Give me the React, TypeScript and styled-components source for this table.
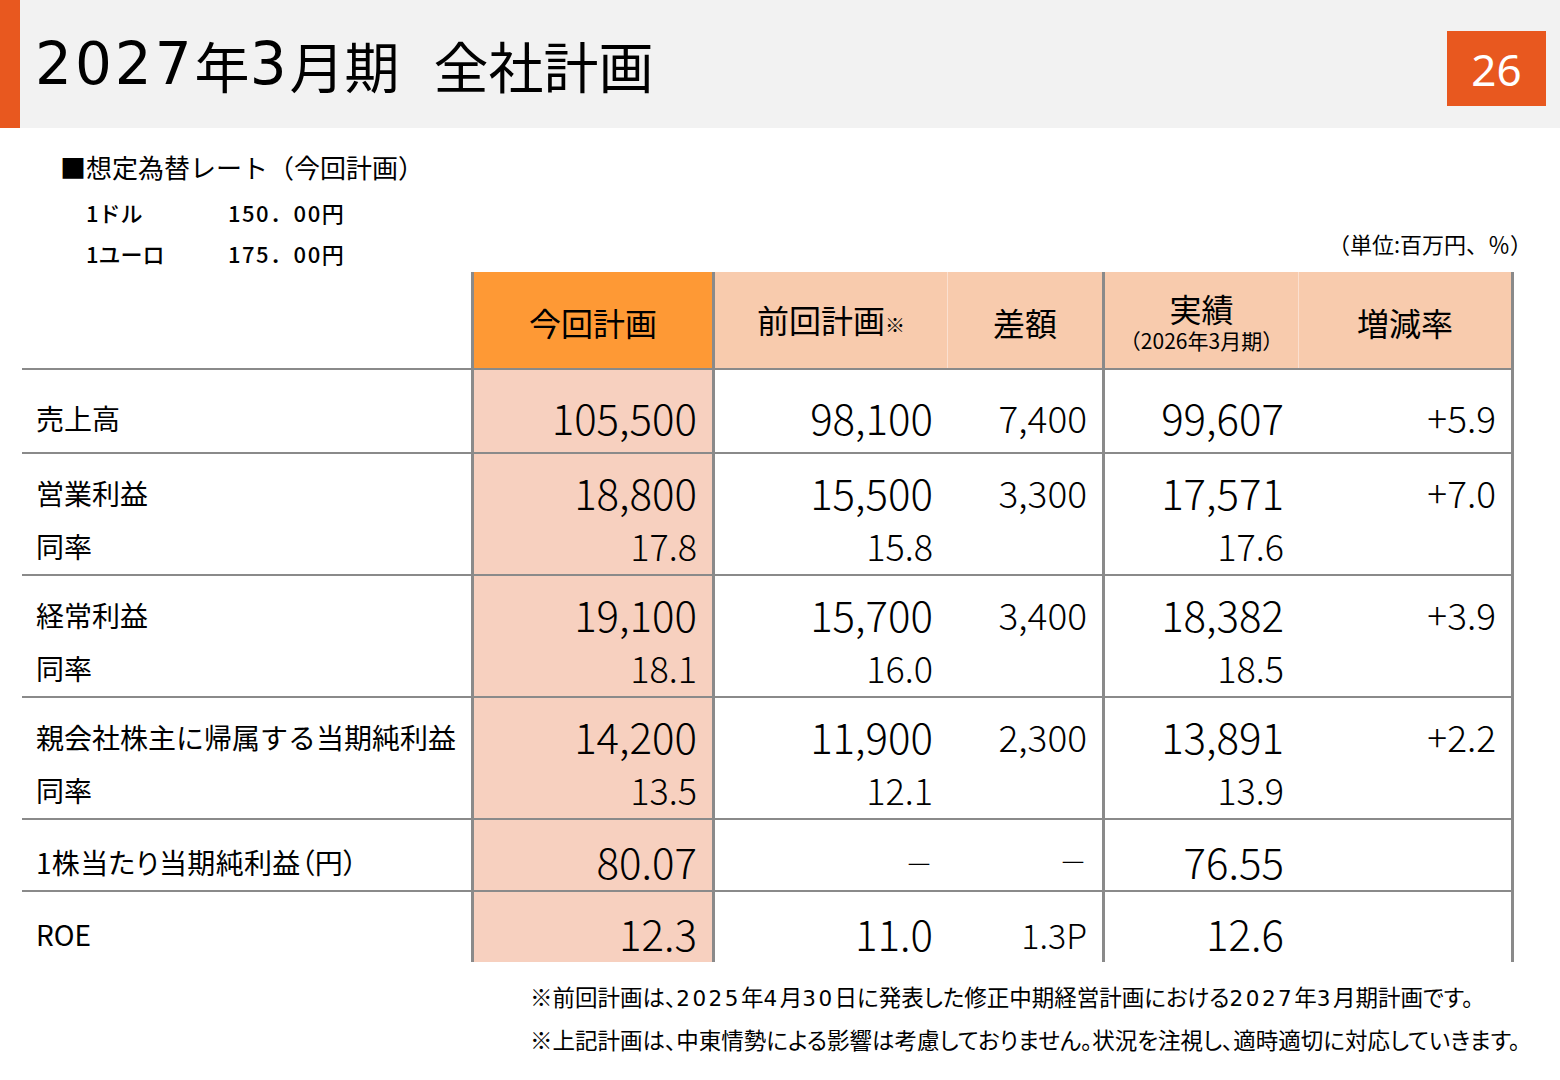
import React from "react";
import styled, { createGlobalStyle, css } from "styled-components";

const GlobalStyle = createGlobalStyle`
  html, body { margin: 0; padding: 0; background: #ffffff; }
  body {
    font-family: "Noto Sans CJK JP", "Noto Sans", sans-serif;
    color: #111;
  }
`;

const ORANGE = "#e8581f";
const LINE = "#8a8a8a";

const Page = styled.div`
  width: 1560px;
  height: 1080px;
  background: #fff;
  display: flex;
  flex-direction: column;
  overflow: hidden;
`;

const Header = styled.header`
  height: 128px;
  flex-shrink: 0;
  background: #f2f2f2;
  display: flex;
  align-items: stretch;
`;

const Accent = styled.div`
  width: 20px;
  flex-shrink: 0;
  background: ${ORANGE};
`;

const Title = styled.h1`
  margin: 0;
  flex: 1;
  display: flex;
  align-items: center;
  padding: 0 0 0 15px;
  font-size: 55px;
  font-weight: 400;
  color: #000;
  white-space: nowrap;
`;

const TitleNum = styled.span`
  font-family: "DejaVu Sans", "Noto Sans CJK JP", sans-serif;
  font-size: 58px;
  letter-spacing: 3px;
`;

const TitleGap = styled.span`
  display: inline-block;
  width: 34px;
`;

const PageNo = styled.div`
  align-self: flex-start;
  margin: 31px 14px 0 0;
  width: 99px;
  height: 75px;
  background: ${ORANGE};
  color: #fff;
  display: flex;
  align-items: center;
  justify-content: center;
  font-size: 44px;
  font-family: "Noto Sans", "Noto Sans CJK JP", sans-serif;
`;

const InfoArea = styled.section`
  height: 144px;
  width: 1510px;
  margin-left: 22px;
  display: flex;
  justify-content: space-between;
  align-items: flex-start;
`;

const RateBlock = styled.div`
  padding: 22px 0 0 38px;
  display: flex;
  flex-direction: column;
`;

const RateTitle = styled.div`
  font-size: 26px;
  line-height: 34px;
  color: #000;
  white-space: nowrap;
`;

const RateGrid = styled.div`
  display: grid;
  grid-template-columns: 142px auto;
  grid-template-rows: 42px 40px;
  padding: 7px 0 0 26px;
  font-size: 22px;
  font-weight: 500;
  color: #000;
  align-items: center;
`;

const RateValue = styled.span`
  letter-spacing: 1.5px;
`;

const Units = styled.div`
  align-self: flex-end;
  font-size: 22px;
  line-height: 26px;
  padding-bottom: 16px;
  color: #000;
  white-space: nowrap;
`;

const Grid = styled.div`
  margin-left: 22px;
  width: 1492px;
  display: grid;
  grid-template-columns: 452px 241px 233px 157px 194px 215px;
  grid-template-rows: 96px 84px 122px 122px 122px 72px 72px;
`;

type Edge = "thick" | "thin" | "none";

const edgeCss = (edge: Edge) =>
  edge === "thick"
    ? css`border-right: 3px solid ${LINE};`
    : edge === "thin"
    ? css`border-right: 1px solid #fbe0d0;`
    : css`border-right: none;`;

const HeadCell = styled.div<{ $tone: "blank" | "primary" | "soft"; $edge: Edge }>`
  box-sizing: border-box;
  display: flex;
  flex-direction: column;
  align-items: center;
  justify-content: center;
  padding-top: 3px;
  font-size: 32px;
  color: #000;
  background: ${(p) =>
    p.$tone === "primary" ? "#fe9935" : p.$tone === "soft" ? "#f8cbad" : "#fff"};
  ${(p) => edgeCss(p.$edge)}
`;

const HeadMain = styled.span`
  line-height: 34px;
`;

const HeadSub = styled.span`
  font-size: 21px;
  line-height: 24px;
  margin-top: 3px;
  white-space: nowrap;
`;

const Mark = styled.span`
  font-size: 20px;
`;

const LabelCell = styled.div`
  box-sizing: border-box;
  border-top: 2px solid ${LINE};
  border-right: 3px solid ${LINE};
  display: flex;
  flex-direction: column;
  justify-content: center;
  align-items: flex-start;
  padding: 14px 0 0 14px;
  font-size: 28px;
  color: #000;
`;

const Palt = styled.span`
  font-feature-settings: "palt";
  letter-spacing: 0.3px;
`;

const DataCell = styled.div<{ $primary: boolean; $edge: Edge }>`
  box-sizing: border-box;
  border-top: 2px solid ${LINE};
  ${(p) => edgeCss(p.$edge)}
  background: ${(p) => (p.$primary ? "#f7d0bf" : "#fff")};
  display: flex;
  flex-direction: column;
  justify-content: center;
  align-items: flex-end;
  padding: 12px 15px 0 0;
  color: #000;
  font-weight: 300;
`;

const MainLine = styled.span<{ $size: number }>`
  font-size: ${(p) => p.$size}px;
  line-height: 50px;
  height: 50px;
  white-space: nowrap;
`;

const SubLine = styled.span<{ $size: number }>`
  font-size: ${(p) => p.$size}px;
  line-height: 56px;
  height: 56px;
  white-space: nowrap;
`;

const Dash = styled.span`
  font-size: 28px;
  position: relative;
  top: -4px;
`;

const Small = styled.span`
  font-size: 34px;
`;

const Notes = styled.div`
  margin-top: 14px;
  padding-left: 530px;
  font-size: 22.5px;
  line-height: 41px;
  color: #000;
  white-space: nowrap;
  font-feature-settings: "palt";
`;

const NoteNum = styled.span`
  font-family: "DejaVu Sans", "Noto Sans CJK JP", sans-serif;
  font-size: 21.5px;
  letter-spacing: 2.5px;
`;

type Row = {
  label: React.ReactNode;
  sub?: string;
  vals: React.ReactNode[];
  subs?: string[];
};

const DASH = <Dash>－</Dash>;

const rows: Row[] = [
  { label: "売上高", vals: ["105,500", "98,100", "7,400", "99,607", "+5.9"] },
  {
    label: "営業利益",
    sub: "同率",
    vals: ["18,800", "15,500", "3,300", "17,571", "+7.0"],
    subs: ["17.8", "15.8", "", "17.6", ""],
  },
  {
    label: "経常利益",
    sub: "同率",
    vals: ["19,100", "15,700", "3,400", "18,382", "+3.9"],
    subs: ["18.1", "16.0", "", "18.5", ""],
  },
  {
    label: "親会社株主に帰属する当期純利益",
    sub: "同率",
    vals: ["14,200", "11,900", "2,300", "13,891", "+2.2"],
    subs: ["13.5", "12.1", "", "13.9", ""],
  },
  {
    label: <Palt>1株当たり当期純利益（円）</Palt>,
    vals: ["80.07", DASH, DASH, "76.55", ""],
  },
  { label: "ROE", vals: ["12.3", "11.0", <Small>1.3P</Small>, "12.6", ""] },
];

const edges: Edge[] = ["thick", "none", "thick", "none", "thick"];
const sizes = [42, 42, 37, 42, 37];

export default function App() {
  return (
    <>
      <GlobalStyle />
      <Page>
        <Header>
          <Accent />
          <Title>
            <TitleNum>2027</TitleNum>年<TitleNum>3</TitleNum>月期<TitleGap />全社計画
          </Title>
          <PageNo>26</PageNo>
        </Header>

        <InfoArea>
          <RateBlock>
            <RateTitle>■想定為替レート（今回計画）</RateTitle>
            <RateGrid>
              <span>1ドル</span>
              <RateValue>150．00円</RateValue>
              <span>1ユーロ</span>
              <RateValue>175．00円</RateValue>
            </RateGrid>
          </RateBlock>
          <Units>（単位:百万円、％）</Units>
        </InfoArea>

        <Grid>
          <HeadCell $tone="blank" $edge="thick" />
          <HeadCell $tone="primary" $edge="thick">
            <HeadMain>今回計画</HeadMain>
          </HeadCell>
          <HeadCell $tone="soft" $edge="thin">
            <HeadMain>
              前回計画<Mark>※</Mark>
            </HeadMain>
          </HeadCell>
          <HeadCell $tone="soft" $edge="thick">
            <HeadMain>差額</HeadMain>
          </HeadCell>
          <HeadCell $tone="soft" $edge="thin">
            <HeadMain>実績</HeadMain>
            <HeadSub>（2026年3月期）</HeadSub>
          </HeadCell>
          <HeadCell $tone="soft" $edge="thick">
            <HeadMain>増減率</HeadMain>
          </HeadCell>

          {rows.map((r, ri) => (
            <React.Fragment key={ri}>
              <LabelCell>
                <MainLine $size={28}>{r.label}</MainLine>
                {r.sub && <SubLine $size={28}>{r.sub}</SubLine>}
              </LabelCell>
              {r.vals.map((v, ci) => (
                <DataCell key={ci} $primary={ci === 0} $edge={edges[ci]}>
                  <MainLine $size={sizes[ci]}>{v}</MainLine>
                  {r.subs && <SubLine $size={36}>{r.subs[ci]}</SubLine>}
                </DataCell>
              ))}
            </React.Fragment>
          ))}
        </Grid>

        <Notes>
          <div>
            ※前回計画は、<NoteNum>2025</NoteNum>年<NoteNum>4</NoteNum>月<NoteNum>30</NoteNum>
            日に発表した修正中期経営計画における<NoteNum>2027</NoteNum>年<NoteNum>3</NoteNum>
            月期計画です。
          </div>
          <div>※上記計画は、中東情勢による影響は考慮しておりません。状況を注視し、適時適切に対応していきます。</div>
        </Notes>
      </Page>
    </>
  );
}
